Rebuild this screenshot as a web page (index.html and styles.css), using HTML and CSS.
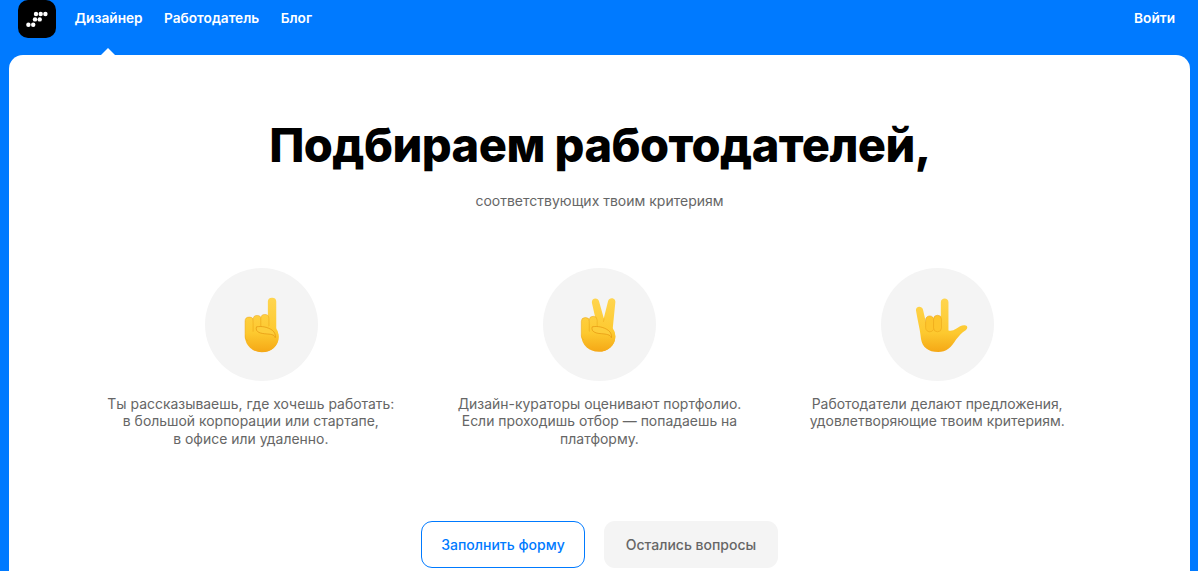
FILE: index.html
```html
<!DOCTYPE html>
<html lang="ru">
<head>
<meta charset="utf-8">
<title>Подбираем работодателей</title>
<link rel="stylesheet" href="styles.css">
</head>
<body>
<header class="topbar">
  <a class="logo" href="#">
    <svg width="38" height="38" viewBox="0 0 38 38">
      <g fill="#fff">
        <circle cx="18" cy="14" r="2.2"/><circle cx="22.7" cy="14" r="2.2"/><circle cx="27.4" cy="14" r="2.2"/>
        <circle cx="17" cy="19.4" r="2.2"/><circle cx="21.7" cy="19.4" r="2.2"/>
        <circle cx="10.4" cy="24.8" r="2.2"/><circle cx="15.2" cy="24.8" r="2.2"/>
      </g>
    </svg>
  </a>
  <nav class="nav">
    <a class="nav-link nav-active" href="#">Дизайнер</a>
    <a class="nav-link" href="#">Работодатель</a>
    <a class="nav-link" href="#">Блог</a>
  </nav>
  <a class="nav-link login" href="#">Войти</a>
</header>
<main class="card">
  <h1 class="title">Подбираем работодателей,</h1>
  <p class="subtitle">соответствующих твоим критериям</p>
  <section class="steps">
    <div class="step">
      <div class="bubble">
        <svg class="hand-one" viewBox="130 105 110 170">
          <defs><linearGradient id="g1" gradientUnits="userSpaceOnUse" x1="0" y1="110" x2="0" y2="272"><stop offset="0" stop-color="#ffd54f"/><stop offset=".65" stop-color="#fdc92f"/><stop offset="1" stop-color="#f5a816"/></linearGradient></defs>
          <rect x="204" y="110" width="25" height="105" rx="12" fill="url(#g1)"/>
          <ellipse cx="186" cy="226" rx="50" ry="47" fill="url(#g1)"/>
          <rect x="136" y="168" width="25" height="70" rx="12" fill="url(#g1)" stroke="#eba315" stroke-width="1.5"/>
          <rect x="160" y="163" width="24" height="60" rx="12" fill="url(#g1)" stroke="#eba315" stroke-width="1.5"/>
          <rect x="183" y="160" width="24" height="60" rx="12" fill="url(#g1)" stroke="#eba315" stroke-width="1.5"/>
          <path d="M137 215c6 30 26 55 50 57 28 0 49-18 49-44 0-18-12-28-24-34l-45 16z" fill="url(#g1)"/>
          <path d="M170 197c16-3 34 1 47 10 8 6 10 14 9 22-2-10-16-10-27-11-14-1-34-4-29-21z" fill="#fdcd3a" stroke="#e2920e" stroke-width="2" stroke-linejoin="round"/>
        </svg>
      </div>
      <p class="step-text step-text-first">Ты рассказываешь, где хочешь работать:<br>в большой корпорации или стартапе,<br>в офисе или удаленно.</p>
    </div>
    <div class="step">
      <div class="bubble">
        <svg class="hand-two" viewBox="130 105 115 170">
          <defs><linearGradient id="g2" gradientUnits="userSpaceOnUse" x1="0" y1="110" x2="0" y2="272"><stop offset="0" stop-color="#ffd54f"/><stop offset=".65" stop-color="#fdc92f"/><stop offset="1" stop-color="#f5a816"/></linearGradient></defs>
          <path d="M169 124c-2-15 19-18 22-3l14 50 13-52c4-14 24-10 22 4l-9 90h-42z" fill="url(#g2)"/>
          <path d="M206 172l-6 26" stroke="#eba315" stroke-width="1.5" fill="none"/>
          <ellipse cx="189" cy="226" rx="51" ry="46" fill="url(#g2)"/>
          <rect x="137" y="169" width="25" height="68" rx="12" fill="url(#g2)" stroke="#eba315" stroke-width="1.5"/>
          <rect x="161" y="165" width="24" height="55" rx="12" fill="url(#g2)" stroke="#eba315" stroke-width="1.5"/>
          <path d="M138 215c6 30 26 55 52 57 28 0 50-18 50-46 0-16-12-24-24-30l-45 14z" fill="url(#g2)"/>
          <path d="M170 197c16-3 36 1 49 11 8 6 10 14 9 22-2-10-18-11-29-12-14-1-34-4-29-21z" fill="#fdcd3a" stroke="#e2920e" stroke-width="2" stroke-linejoin="round"/>
        </svg>
      </div>
      <p class="step-text">Дизайн-кураторы оценивают портфолио.<br>Если проходишь отбор — попадаешь на<br>платформу.</p>
    </div>
    <div class="step">
      <div class="bubble">
        <svg class="hand-three" viewBox="130 105 160 170">
          <defs><linearGradient id="g3" gradientUnits="userSpaceOnUse" x1="0" y1="110" x2="0" y2="272"><stop offset="0" stop-color="#ffd54f"/><stop offset=".65" stop-color="#fdc92f"/><stop offset="1" stop-color="#f5a816"/></linearGradient></defs>
          <path d="M133 148c-2-14 18-16 21-3l9 38h45v-60c0-15 23-15 23 0v85c9 2 15 0 23-5 10-7 20-13 29-10 7 2 6 10 0 14-13 8-20 17-29 28-14 24-30 38-54 38-30 0-48-14-52-40-2-24-9-50-15-85z" fill="url(#g3)"/>
          <rect x="162" y="164" width="25" height="48" rx="12.5" fill="#fdc52c" stroke="#e9a014" stroke-width="1.5"/>
          <rect x="186" y="162" width="24" height="50" rx="12" fill="#fdc52c" stroke="#e9a014" stroke-width="1.5"/>
        </svg>
      </div>
      <p class="step-text">Работодатели делают предложения,<br>удовлетворяющие твоим критериям.</p>
    </div>
  </section>
  <div class="actions">
    <a class="btn btn-primary" href="#">Заполнить форму</a>
    <a class="btn btn-secondary" href="#">Остались вопросы</a>
  </div>
</main>
</body>
</html>
```
FILE: styles.css
```css
html, body { margin: 0; padding: 0; height: 100%; overflow: hidden; }
body { background: #007aff; font-family: "Inter", "Liberation Sans", sans-serif; }
a { text-decoration: none; }
p, h1 { margin: 0; }
.topbar { height: 55px; display: flex; align-items: flex-start; padding: 0 23px 0 18px; box-sizing: border-box; }
.logo { width: 38px; height: 38px; background: #000; border-radius: 10px; display: block; }
.logo svg { display: block; }
.nav { display: flex; gap: 21.5px; margin-left: 19px; flex: 1; }
.nav-link { color: #fff; font-size: 13.65px; font-weight: 600; line-height: 36px; }
.nav-active { position: relative; display: block; margin-left: -0.5px; }
.nav-active::after { content: ""; position: absolute; left: 26px; top: 48px; border: 7px solid transparent; border-top: 0; border-bottom-color: #fff; }
.card { margin: 0 8px 0 9px; height: 516px; background: #fff; border-radius: 14px 14px 0 0; display: flex; flex-direction: column; align-items: center; }
.title { margin-top: 60px; padding-left: 1px; font-size: 47px; line-height: 60px; font-weight: 800; color: #000; letter-spacing: -0.55px; }
.subtitle { margin-top: 17px; font-size: 14px; line-height: 18px; color: #666; }
.steps { margin-top: 58px; width: 1013px; display: grid; grid-template-columns: repeat(3, 1fr); }
.step { display: flex; flex-direction: column; align-items: center; }
.bubble { width: 113px; height: 113px; border-radius: 50%; background: #f4f4f4; display: flex; align-items: center; justify-content: center; }
.hand-one { width: 37px; height: 57px; }
.hand-two { width: 38px; height: 57px; margin-left: -3px; }
.hand-three { width: 53px; height: 57px; margin-left: 9px; }
.step-text { margin-top: 13.5px; font-size: 13.95px; line-height: 17.5px; color: #666; text-align: center; white-space: nowrap; }
.step-text-first { margin-right: 22px; }
.actions { margin-top: 73.5px; display: flex; gap: 19px; }
.btn { height: 47px; box-sizing: border-box; border-radius: 11px; font-size: 14px; font-weight: 500; display: flex; align-items: center; justify-content: center; }
.btn-primary { width: 164px; border: 1px solid #007aff; color: #007aff; }
.btn-secondary { width: 174px; background: #f4f4f4; color: #666; }
```
